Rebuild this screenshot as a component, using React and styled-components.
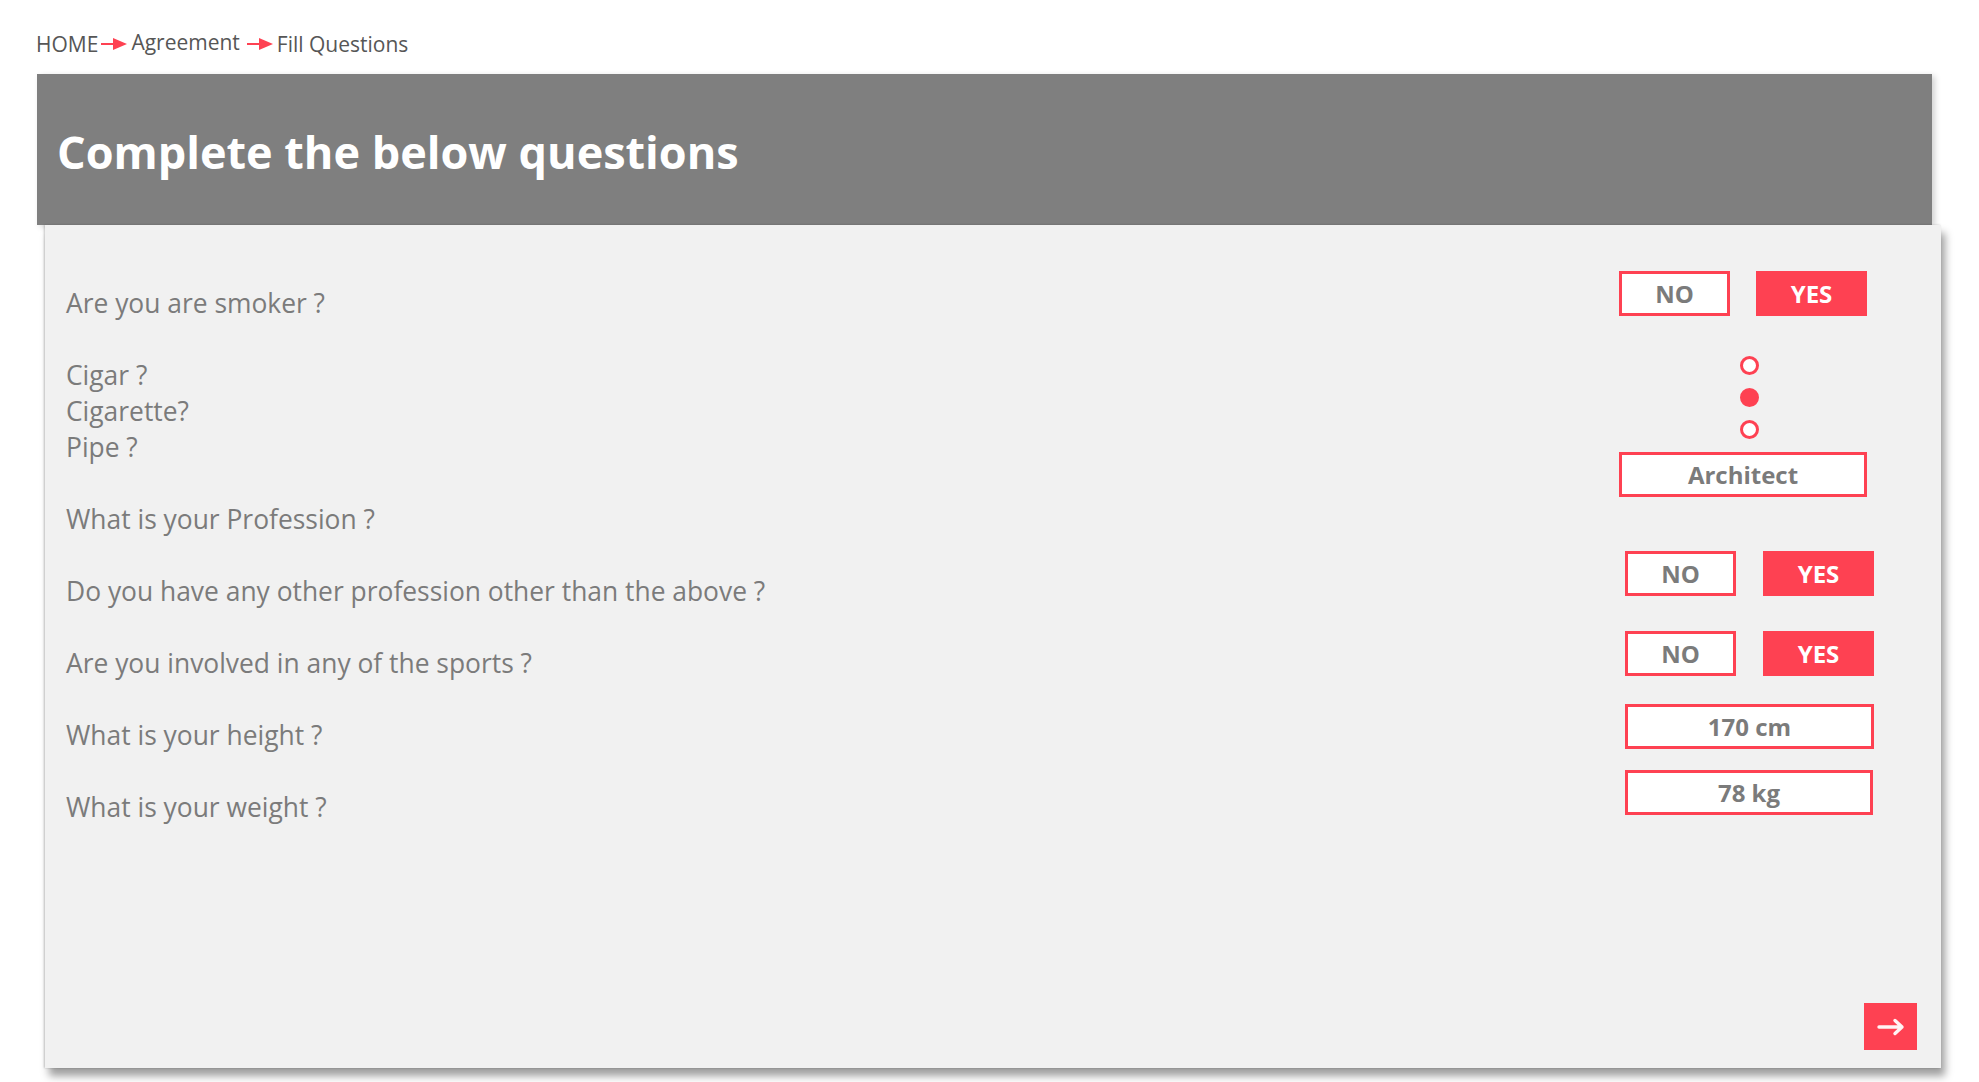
import React from "react";
import styled, { createGlobalStyle } from "styled-components";

const RED = "#fe4152";
const GREY_TEXT = "#7b7b7b";

const GlobalStyle = createGlobalStyle`
  html, body {
    margin: 0;
    padding: 0;
    background: #ffffff;
    font-family: "Open Sans", "Noto Sans", Arial, sans-serif;
  }
  * {
    box-sizing: border-box;
  }
`;

const Page = styled.div`
  width: 1979px;
  min-height: 1082px;
  background: #fff;
`;

const Breadcrumb = styled.nav`
  display: flex;
  align-items: center;
  height: 74px;
  padding: 13px 0 0 36px;
  font-size: 21px;
  color: #565656;
`;

const Crumb = styled.span`
  line-height: 28px;
  position: relative;
  top: ${(p) => (p.$raise ? "-2px" : "0")};
`;

const CrumbArrow = styled.svg`
  width: 26px;
  height: 14px;
  margin: 0 4px 0 ${(p) => p.$gap || 3}px;
  flex-shrink: 0;
`;

const Header = styled.header`
  margin-left: 37px;
  width: 1895px;
  height: 151px;
  background: #7f7f7f;
  display: flex;
  align-items: center;
  padding: 3px 0 0 20px;
  box-shadow: 3px 2px 6px rgba(0, 0, 0, 0.18);
`;

const Title = styled.h1`
  margin: 0;
  color: #ffffff;
  font-size: 45px;
  font-weight: 700;
`;

const Panel = styled.section`
  margin-left: 45px;
  width: 1896px;
  height: 843px;
  background: #f1f1f1;
  display: flex;
  flex-direction: column;
  box-shadow: -1px 0 2px rgba(0, 0, 0, 0.2), 4px 8px 8px rgba(0, 0, 0, 0.38);
  position: relative;
`;

const Body = styled.div`
  display: flex;
  justify-content: space-between;
  padding: 0 67px 0 21px;
`;

const Questions = styled.div`
  display: flex;
  flex-direction: column;
  gap: 36px;
  padding-top: 60px;
`;

const Question = styled.div`
  font-size: 26.4px;
  line-height: 36px;
  color: ${GREY_TEXT};
`;

const Controls = styled.div`
  width: 255px;
  display: flex;
  flex-direction: column;
  padding-top: 46px;
`;

const ButtonRow = styled.div`
  display: flex;
  gap: ${(p) => p.$gap || 26}px;
  margin-top: ${(p) => p.$mt || 0}px;
  margin-left: ${(p) => p.$indent || 0}px;
`;

const Choice = styled.div`
  width: 111px;
  height: 45px;
  display: flex;
  align-items: center;
  justify-content: center;
  font-size: 24px;
  font-weight: 700;
  color: ${(p) => (p.$active ? "#ffffff" : GREY_TEXT)};
  background: ${(p) => (p.$active ? RED : "#ffffff")};
  border: 3px solid ${RED};
`;

const ValueBox = styled.div`
  width: ${(p) => p.$w || 248}px;
  height: 45px;
  margin-top: ${(p) => p.$mt || 0}px;
  margin-left: ${(p) => p.$indent || 0}px;
  display: flex;
  align-items: center;
  justify-content: center;
  font-size: 24px;
  font-weight: 700;
  color: ${GREY_TEXT};
  background: #ffffff;
  border: 3px solid ${RED};
`;

const RadioGroup = styled.div`
  width: 248px;
  display: flex;
  flex-direction: column;
  align-items: center;
  gap: 13px;
  margin-top: 40px;
  padding-left: 12px;
`;

const Radio = styled.span`
  width: 19px;
  height: 19px;
  border-radius: 50%;
  border: 3px solid ${RED};
  background: ${(p) => (p.$checked ? RED : "#ffffff")};
`;

const Footer = styled.div`
  margin-top: auto;
  display: flex;
  justify-content: flex-end;
  padding: 0 24px 18px 0;
`;

const NextButton = styled.button`
  width: 53px;
  height: 47px;
  border: none;
  background: ${RED};
  display: flex;
  align-items: center;
  justify-content: center;
  padding: 0;
  cursor: pointer;
`;

function Arrow({ gap }) {
  return (
    <CrumbArrow viewBox="0 0 26 14" $gap={gap}>
      <line x1="0" y1="7" x2="14" y2="7" stroke={RED} strokeWidth="2" />
      <polygon points="12,1 26,7 12,13" fill={RED} />
    </CrumbArrow>
  );
}

const questions = [
  ["Are you are smoker ?"],
  ["Cigar ?", "Cigarette?", "Pipe ?"],
  ["What is your Profession ?"],
  ["Do you have any other profession other than the above ?"],
  ["Are you involved in any of the sports ?"],
  ["What is your height ?"],
  ["What is your weight ?"],
];

export default function App() {
  return (
    <Page>
      <GlobalStyle />
      <Breadcrumb>
        <Crumb>HOME</Crumb>
        <Arrow gap={3} />
        <Crumb $raise>Agreement</Crumb>
        <Arrow gap={7} />
        <Crumb>Fill Questions</Crumb>
      </Breadcrumb>

      <Header>
        <Title>Complete the below questions</Title>
      </Header>

      <Panel>
        <Body>
          <Questions>
            {questions.map((lines, i) => (
              <div key={i}>
                {lines.map((line) => (
                  <Question key={line}>{line}</Question>
                ))}
              </div>
            ))}
          </Questions>

          <Controls>
            <ButtonRow>
              <Choice>NO</Choice>
              <Choice $active>YES</Choice>
            </ButtonRow>
            <RadioGroup>
              <Radio />
              <Radio $checked />
              <Radio />
            </RadioGroup>
            <ValueBox $mt={13}>Architect</ValueBox>
            <ButtonRow $mt={54} $indent={6} $gap={27}>
              <Choice>NO</Choice>
              <Choice $active>YES</Choice>
            </ButtonRow>
            <ButtonRow $mt={35} $indent={6} $gap={27}>
              <Choice>NO</Choice>
              <Choice $active>YES</Choice>
            </ButtonRow>
            <ValueBox $mt={28} $indent={6} $w={249}>
              170 cm
            </ValueBox>
            <ValueBox $mt={21} $indent={6}>
              78 kg
            </ValueBox>
          </Controls>
        </Body>

        <Footer>
          <NextButton aria-label="Next">
            <svg width="28" height="18" viewBox="0 0 28 18">
              <path
                d="M2 9 H25 M18 2.5 L25 9 L18 15.5"
                fill="none"
                stroke="#fff4f4"
                strokeWidth="3.4"
                strokeLinecap="round"
                strokeLinejoin="round"
              />
            </svg>
          </NextButton>
        </Footer>
      </Panel>
    </Page>
  );
}
